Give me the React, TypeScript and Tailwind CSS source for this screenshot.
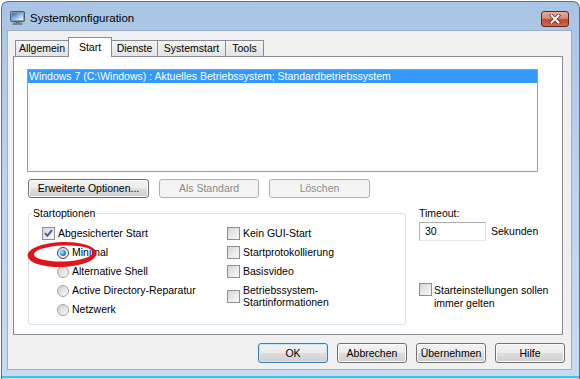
import type { ReactNode } from "react";

// Win7 style check box
function CheckBox({ checked = false }: { checked?: boolean }) {
  return (
    <span className="flex h-[13px] w-[13px] shrink-0 items-center justify-center border border-[#8e8f8f] bg-white">
      <span className="flex h-[11px] w-[11px] items-center justify-center bg-linear-to-br from-[#d6d6d6] to-[#fbfbfb]">
        {checked && (
          <svg width="9" height="9" viewBox="0 0 9 9">
            <path d="M1 4.2 L3.4 6.8 L8 1.2" stroke="#3f5ba9" strokeWidth="1.9" fill="none" />
          </svg>
        )}
      </span>
    </span>
  );
}

function Radio({ checked = false }: { checked?: boolean }) {
  return (
    <span
      className={`flex h-[12px] w-[12px] shrink-0 items-center justify-center rounded-full border bg-linear-to-br from-[#cfcfcf] to-[#fbfbfb] ${
        checked ? "border-[#3a4a5c]" : "border-[#a2a2a2]"
      }`}
    >
      {checked && (
        <span className="h-[6px] w-[6px] rounded-full bg-[radial-gradient(circle_at_35%_35%,#b5ecff,#2a86c8_55%,#0d4f8a)]" />
      )}
    </span>
  );
}

function Button({
  children,
  w,
  h = "h-[19px]",
  disabled = false,
  primary = false,
}: {
  children: ReactNode;
  w: string;
  h?: string;
  disabled?: boolean;
  primary?: boolean;
}) {
  if (disabled) {
    return (
      <div className={`${w} ${h} flex items-center justify-center rounded-[3px] border border-[#adb2b5] bg-[#f4f4f4] text-[#8a8a8a]`}>
        {children}
      </div>
    );
  }
  return (
    <div
      className={`${w} ${h} flex items-center justify-center rounded-[3px] border bg-[linear-gradient(#f3f3f3_0%,#ebebeb_48%,#dddddd_52%,#cfcfcf_100%)] ${
        primary ? "border-[#3c7fb1] shadow-[inset_0_0_0_1px_#bfe9fb]" : "border-[#707070] shadow-[inset_0_0_0_1px_#fcfcfc]"
      }`}
    >
      {children}
    </div>
  );
}

const tabs = [
  { label: "Allgemein", w: "w-[54px]" },
  { label: "Start", w: "w-[44px]", active: true },
  { label: "Dienste", w: "w-[47px]" },
  { label: "Systemstart", w: "w-[69px]" },
  { label: "Tools", w: "w-[39px]" },
];

export default function App() {
  return (
    <div className="relative h-[379px] w-[580px] overflow-hidden bg-white font-['Liberation_Sans',Arial,sans-serif] text-[10.5px] leading-[13px] text-black">
      <div className="ml-[1px] mt-[1px] flex h-[378px] w-[579px] flex-col rounded-t-[7px] border-x border-t border-[#50719a] bg-linear-to-b from-[#a9c4e4] via-[#bfd4ee] to-[#c9dbf1]">
        {/* Title bar */}
        <div className="flex h-[28px] shrink-0 items-start pl-[8px] pt-[9px]">
          <svg width="15" height="14" viewBox="0 0 15 14">
            <defs>
              <linearGradient id="scr" x1="0" y1="0" x2="1" y2="1">
                <stop offset="0" stopColor="#2b68c8" />
                <stop offset="0.6" stopColor="#9cc9f3" />
                <stop offset="1" stopColor="#ffffff" />
              </linearGradient>
            </defs>
            <rect x="0.5" y="0.5" width="14" height="10" rx="1" fill="#8c98a6" stroke="#4d5966" />
            <rect x="2" y="2" width="11" height="7" fill="url(#scr)" />
            <rect x="5.5" y="10.5" width="4" height="1.5" fill="#6b7682" />
            <rect x="3" y="12" width="9" height="1.8" rx="0.5" fill="#8c98a6" stroke="#4d5966" strokeWidth="0.6" />
          </svg>
          <span className="ml-[5px] mt-px text-[11.5px]">Systemkonfiguration</span>
          <div className="ml-auto mr-[10px] flex h-[16px] w-[28px] items-center justify-center rounded-[3px] border border-[#5e261d] bg-[linear-gradient(#e9ab9b_0%,#d98b74_45%,#c2472f_55%,#d06b4f_100%)]">
            <svg width="12" height="10" viewBox="0 0 12 10">
              <path d="M2.5 1.5 L9.5 8.5 M9.5 1.5 L2.5 8.5" stroke="#6b2a1f" strokeWidth="3.6" strokeLinecap="square" />
              <path d="M2.5 1.5 L9.5 8.5 M9.5 1.5 L2.5 8.5" stroke="#ffffff" strokeWidth="2" strokeLinecap="square" />
            </svg>
          </div>
        </div>

        {/* Client area */}
        <div className="ml-[5px] flex h-[340px] w-[565px] shrink-0 flex-col border border-[#9cb0c8] bg-[#f0f0f0] pl-[5px] pr-[6px] pt-[6px]">
          {/* Tabs */}
          <div className="relative z-10 ml-[2px] flex h-[19px] items-end">
            {tabs.map((t, i) =>
              t.active ? (
                <div
                  key={t.label}
                  className={`${t.w} -mb-px ${i > 0 ? "-ml-px" : ""} flex h-[20px] items-start justify-center border-x border-t border-[#898c95] bg-white pt-[3px]`}
                >
                  {t.label}
                </div>
              ) : (
                <div
                  key={t.label}
                  className={`${t.w} ${i > 0 ? "-ml-px" : ""} flex h-[16px] items-center justify-center border-x border-t border-[#898c95] bg-linear-to-b from-[#f3f3f3] to-[#e3e3e3]`}
                >
                  {t.label}
                </div>
              )
            )}
          </div>

          {/* Tab panel */}
          <div className="h-[279px] w-[550px] border border-[#898c95] bg-white pl-[13px] pt-[12px]">
            {/* Boot entries list */}
            <div className="h-[103px] w-[511px] border border-[#9c9c9c] bg-white">
              <div className="h-[13px] w-[509px] bg-[#3399ff] pl-[1px] text-white">
                Windows 7 (C:\Windows) : Aktuelles Betriebssystem; Standardbetriebssystem
              </div>
            </div>

            <div className="ml-[1px] mt-[7px] flex gap-[10px]">
              <Button w="w-[121px]">Erweiterte Optionen...</Button>
              <Button w="w-[100px]" disabled>
                Als Standard
              </Button>
              <Button w="w-[101px]" disabled>
                Löschen
              </Button>
            </div>

            <div className="ml-[1px] mt-[9px] flex items-start">
              {/* Startoptionen group */}
              <div className="relative mt-[6px] flex h-[112px] w-[378px] rounded-[3px] border border-[#d5dfe5] pl-[13px] pt-[10px]">
                <span className="absolute -top-[7px] left-[3px] bg-white px-[1px]">Startoptionen</span>
                <div className="flex w-[185px] flex-col">
                  <div className="flex h-[19px] items-center gap-[3px]">
                    <CheckBox checked />
                    <span>Abgesicherter Start</span>
                  </div>
                  <div className="flex h-[19px] items-center gap-[3px] pl-[15px]">
                    <Radio checked />
                    <span>Minimal</span>
                  </div>
                  <div className="flex h-[19px] items-center gap-[3px] pl-[15px]">
                    <Radio />
                    <span>Alternative Shell</span>
                  </div>
                  <div className="flex h-[19px] items-center gap-[3px] pl-[15px]">
                    <Radio />
                    <span>Active Directory-Reparatur</span>
                  </div>
                  <div className="flex h-[19px] items-center gap-[3px] pl-[15px]">
                    <Radio />
                    <span>Netzwerk</span>
                  </div>
                </div>
                <div className="flex flex-col">
                  <div className="flex h-[19px] items-center gap-[3px]">
                    <CheckBox />
                    <span>Kein GUI-Start</span>
                  </div>
                  <div className="flex h-[19px] items-center gap-[3px]">
                    <CheckBox />
                    <span>Startprotokollierung</span>
                  </div>
                  <div className="flex h-[19px] items-center gap-[3px]">
                    <CheckBox />
                    <span>Basisvideo</span>
                  </div>
                  <div className="flex h-[30px] items-center gap-[3px]">
                    <CheckBox />
                    <span className="leading-[12px]">
                      Betriebssystem-
                      <br />
                      Startinformationen
                    </span>
                  </div>
                </div>
              </div>

              {/* Timeout */}
              <div className="ml-[13px] flex flex-col">
                <span>Timeout:</span>
                <div className="mt-[2px] flex items-center">
                  <div className="flex h-[19px] w-[67px] items-center border border-[#abadb3] border-b-[#e3e9ef] border-r-[#dbdfe6] bg-white pl-[5px]">
                    30
                  </div>
                  <span className="ml-[5px]">Sekunden</span>
                </div>
                <div className="mt-[42px] flex items-start gap-[2px]">
                  <CheckBox />
                  <span className="mt-px">
                    Starteinstellungen sollen
                    <br />
                    immer gelten
                  </span>
                </div>
              </div>
            </div>
          </div>

          {/* Dialog buttons */}
          <div className="mt-[8px] flex justify-end gap-[9px]">
            <Button w="w-[70px]" h="h-[20px]" primary>
              OK
            </Button>
            <Button w="w-[70px]" h="h-[20px]">
              Abbrechen
            </Button>
            <Button w="w-[70px]" h="h-[20px]">
              Übernehmen
            </Button>
            <Button w="w-[70px]" h="h-[20px]">
              Hilfe
            </Button>
          </div>
        </div>

        {/* Bottom frame */}
        <div className="flex flex-1 flex-col">
          <div className="mb-[1px] mt-auto h-[2px] bg-[#3cc3ee]" />
        </div>
      </div>

      {/* Red hand-drawn marker around "Minimal" */}
      <svg className="pointer-events-none absolute left-0 top-0" width="580" height="379">
        <path
          fillRule="evenodd"
          fill="#e1141c"
          d="M27.5 254.5 a34.5 12.5 0 1 0 69 0 a34.5 12.5 0 1 0 -69 0 Z M34 253.5 a29.5 8 0 1 0 59 0 a29.5 8 0 1 0 -59 0 Z"
          transform="rotate(-2 62 254)"
        />
      </svg>
    </div>
  );
}
